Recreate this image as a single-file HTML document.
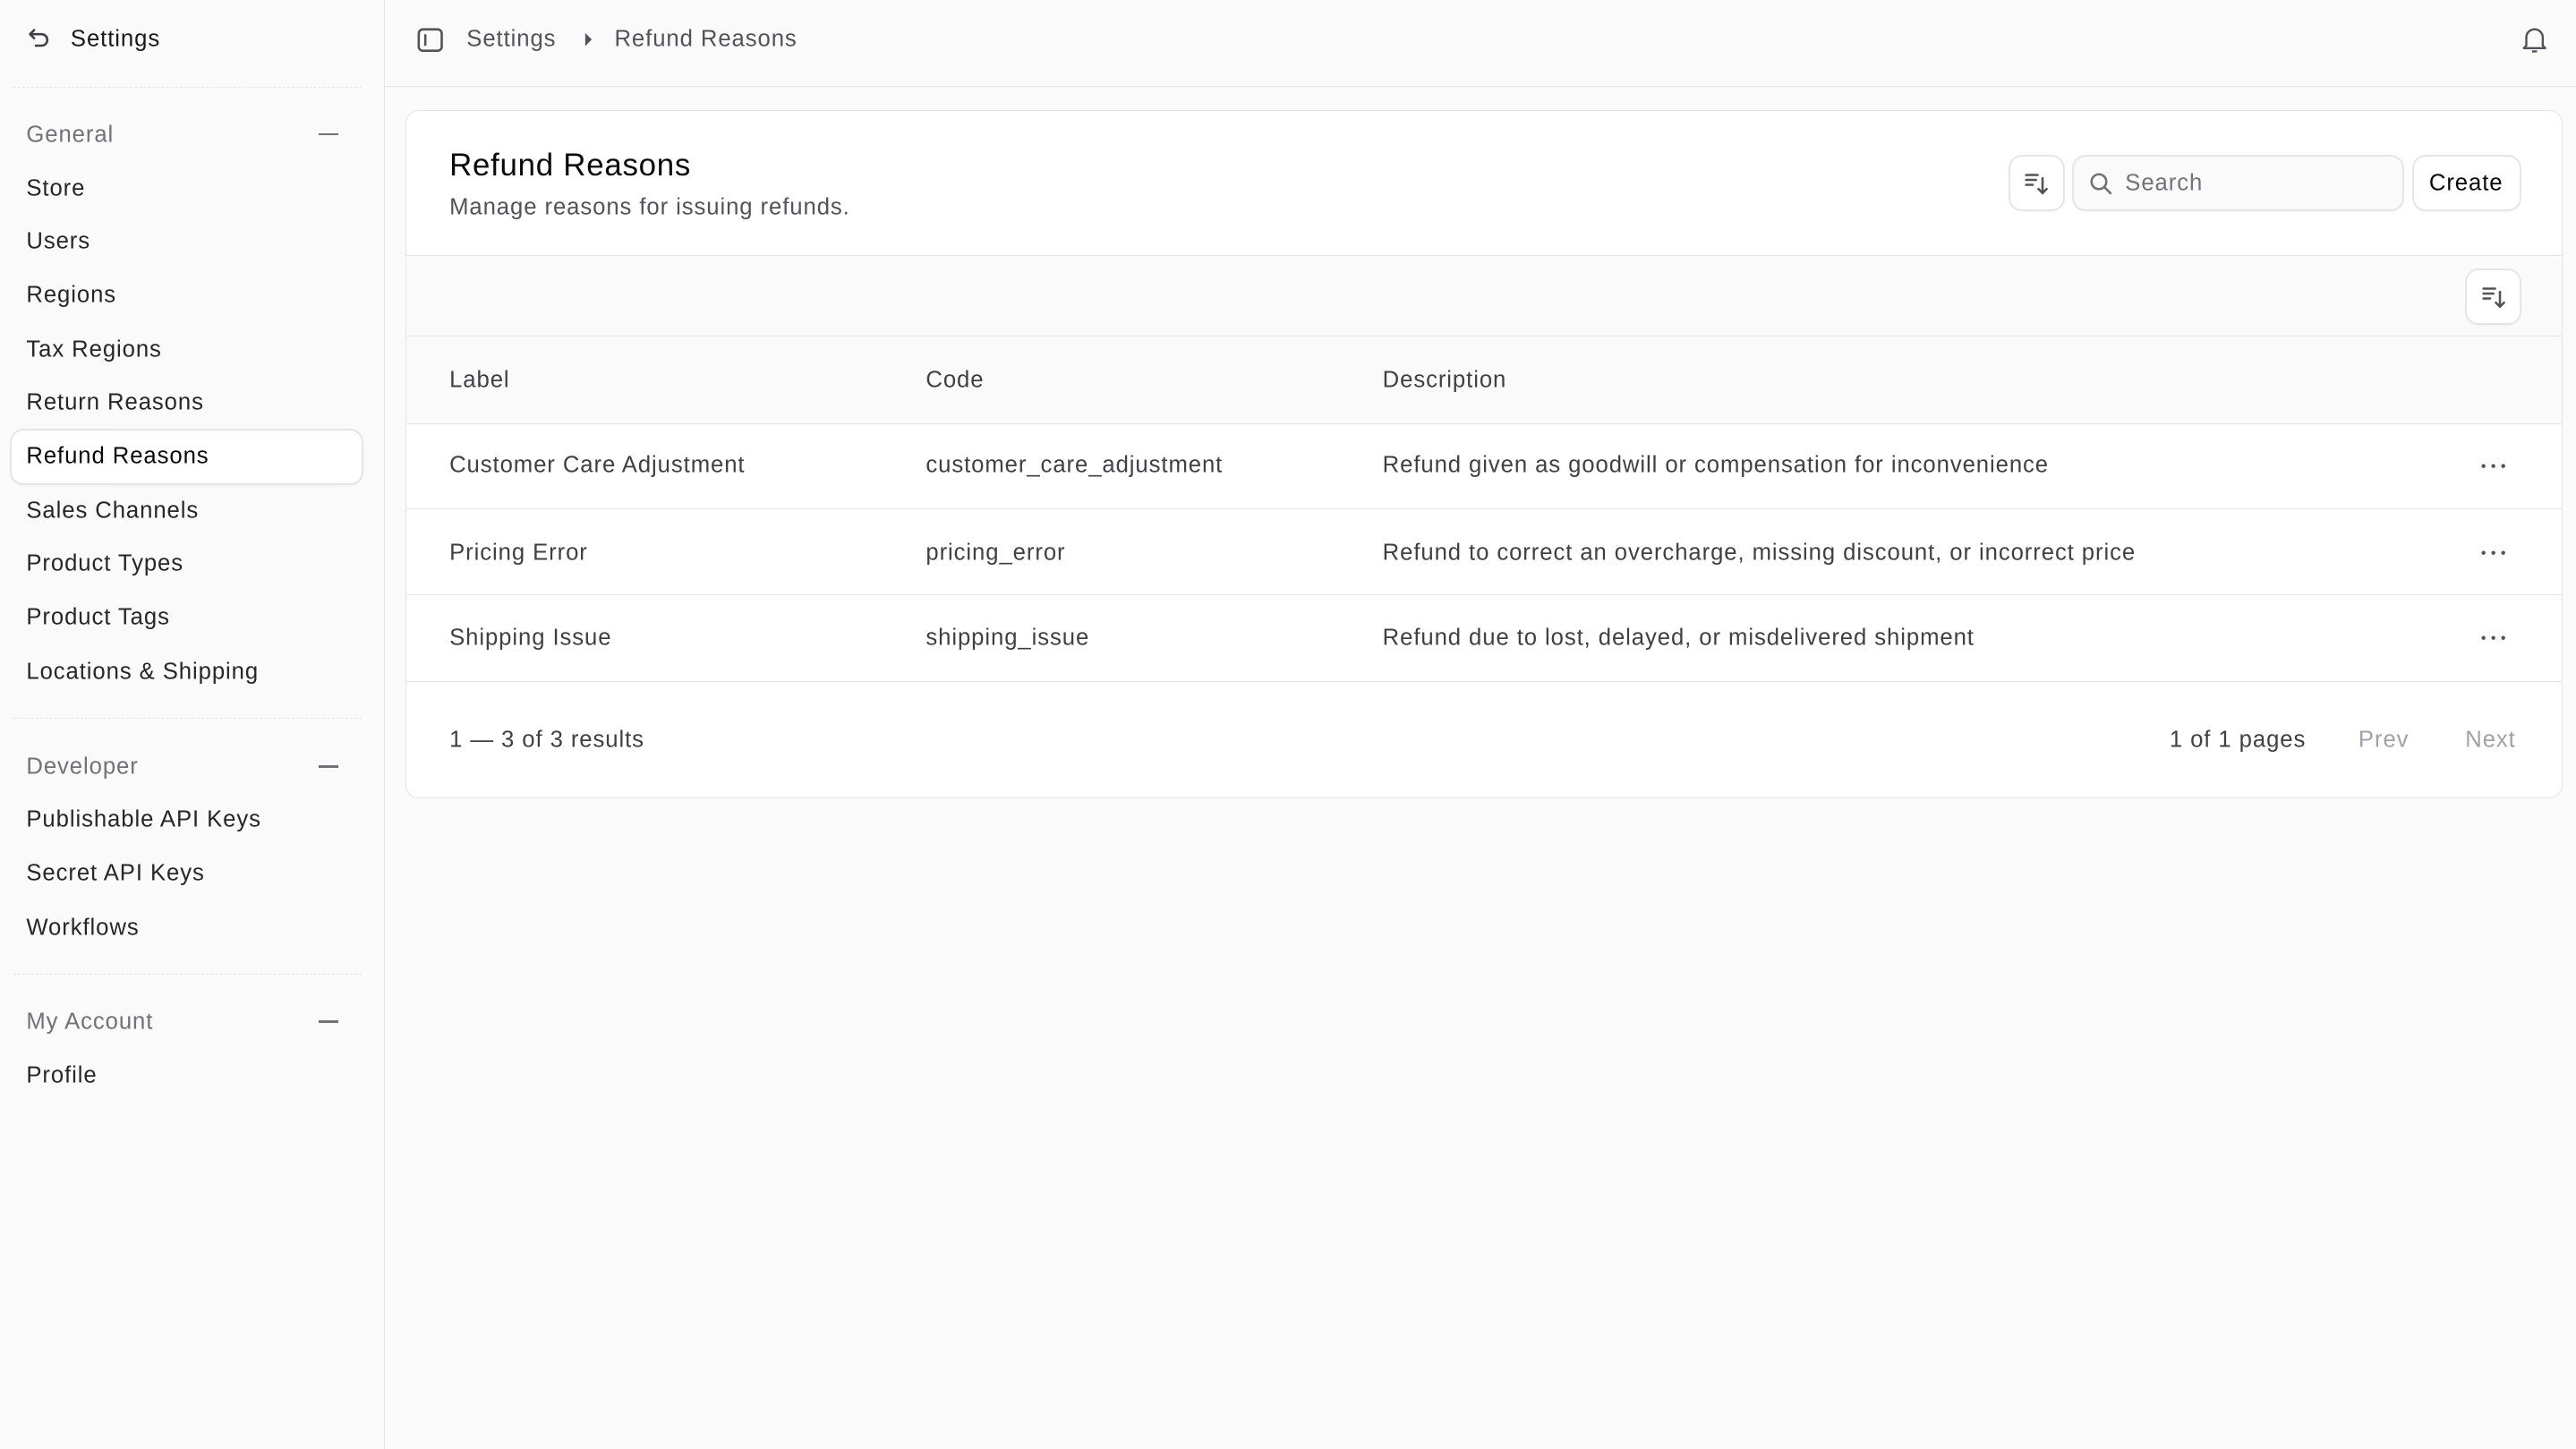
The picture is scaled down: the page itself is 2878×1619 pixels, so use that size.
<!DOCTYPE html>
<html><head><meta charset="utf-8"><style>
*{box-sizing:border-box;margin:0;padding:0}
html,body{width:2878px;height:1619px;overflow:hidden;background:#fafafa}
#r{zoom:1.8355;width:1568px;height:882px;position:relative;font-family:"Liberation Sans",sans-serif;font-size:14px;color:#18181b;letter-spacing:.5px}
.a{position:absolute;white-space:nowrap}
.side{left:0;top:0;width:234px;height:882px;border-right:1px solid #e4e4e7;background:#fafafa}
.sep{position:absolute;left:8px;width:212px;border-top:1px dashed #e4e4e7}
.it{position:absolute;left:16px;line-height:20px;transform:translateY(-10px);color:#27272a}
.gh{color:#71717a}
.min{position:absolute;left:194px;width:12px;height:1.5px;background:#71717a}
.top{left:234px;top:0;right:0;height:53px;border-bottom:1px solid #e4e4e7}
.card{left:247px;top:67px;width:1313px;height:419px;background:#fff;border:1px solid #e4e4e7;border-radius:8px;overflow:hidden}
.btn{position:absolute;background:#fff;border-radius:7px;box-shadow:0 0 0 1px #e4e4e7,0 1px 2px rgba(0,0,0,.08)}
.c{position:absolute;line-height:20px;transform:translateY(-10px);color:#3f3f46;white-space:nowrap}
.hl{position:absolute;left:0;right:0;border-top:1px solid #e4e4e7}
.dots{position:absolute;left:1262px;transform:translateY(0px)}
</style></head><body><div id="r">
<div class="a side">
<svg class="a" style="left:16px;top:16px" width="16" height="16" viewBox="0 0 16 16" fill="none" stroke="#3f3f46" stroke-width="1.4" stroke-linecap="round" stroke-linejoin="round"><path d="M5 2.5 2.5 5 5 7.5M2.5 5h7a3.5 3.5 0 0 1 0 7H6"/></svg>
<div class="it" style="left:43px;top:24px;color:#18181b">Settings</div>
<div class="sep" style="top:53px"></div>
<div class="it gh" style="top:82px">General</div><div class="min" style="top:81px"></div>
<div class="it" style="top:115px">Store</div>
<div class="it" style="top:147px">Users</div>
<div class="it" style="top:180px">Regions</div>
<div class="it" style="top:213px">Tax Regions</div>
<div class="it" style="top:245px">Return Reasons</div>
<div class="a" style="left:7px;top:262px;width:213px;height:32px;background:#fff;border-radius:7px;box-shadow:0 0 0 1px #e4e4e7,0 1px 2px rgba(0,0,0,.08)"></div>
<div class="it" style="top:278px;color:#09090b">Refund Reasons</div>
<div class="it" style="top:311px">Sales Channels</div>
<div class="it" style="top:343px">Product Types</div>
<div class="it" style="top:376px">Product Tags</div>
<div class="it" style="top:409px">Locations &amp; Shipping</div>
<div class="sep" style="top:437px"></div>
<div class="it gh" style="top:467px">Developer</div><div class="min" style="top:466px"></div>
<div class="it" style="top:499px">Publishable API Keys</div>
<div class="it" style="top:532px">Secret API Keys</div>
<div class="it" style="top:565px">Workflows</div>
<div class="sep" style="top:593px"></div>
<div class="it gh" style="top:622px">My Account</div><div class="min" style="top:621px"></div>
<div class="it" style="top:655px">Profile</div>
</div>
<div class="a top">
<svg class="a" style="left:20px;top:17px" width="16" height="15" viewBox="0 0 16 15" fill="none" stroke="#52525b" stroke-width="1.4"><rect x="1" y="1" width="14" height="13" rx="2.5"/><path d="M5 4v7"/></svg>
<div class="it" style="left:50px;top:24px;color:#52525b">Settings</div>
<svg class="a" style="left:121px;top:19px" width="6" height="10"><path d="M1 1l4 4-4 4z" fill="#52525b"/></svg>
<div class="it" style="left:140px;top:24px;color:#52525b">Refund Reasons</div>
<svg class="a" style="left:1301px;top:16px" width="16" height="17" viewBox="0 0 16 17" fill="none" stroke="#52525b" stroke-width="1.3" stroke-linejoin="round"><path d="M3 12V7a5 5 0 0 1 10 0v5l1.5 1.5h-13z"/><path d="M6.5 15.5h3"/></svg>
</div>
<div class="a card">
<div class="c" style="left:26px;top:33px;font-size:19px;line-height:24px;transform:translateY(-12px);color:#09090b;letter-spacing:.4px">Refund Reasons</div>
<div class="c" style="left:26px;top:59px;color:#52525b">Manage reasons for issuing refunds.</div>
<div class="btn" style="left:976px;top:28px;width:32px;height:32px"></div>
<svg class="a" style="left:984px;top:36px" width="16" height="16" viewBox="0 0 16 16" fill="none" stroke="#52525b" stroke-width="1.4" stroke-linecap="round"><path d="M2 3h7M2 6h6M2 9h4M12 5v9M9.5 11.5 12 14l2.5-2.5"/></svg>
<div class="btn" style="left:1015px;top:28px;width:200px;height:32px;background:#fafafa"></div>
<svg class="a" style="left:1024px;top:37px" width="14" height="14" viewBox="0 0 14 14" fill="none" stroke="#71717a" stroke-width="1.4" stroke-linecap="round"><circle cx="6" cy="6" r="4.5"/><path d="M9.5 9.5 13 13"/></svg>
<div class="c" style="left:1046px;top:44px;color:#71717a">Search</div>
<div class="btn" style="left:1222px;top:28px;width:64px;height:32px"></div>
<div class="c" style="left:1231px;top:44px;color:#09090b">Create</div>
<div class="hl" style="top:88px"></div>
<div class="a" style="left:0;right:0;top:89px;height:102px;background:#fafafa"></div>
<div class="btn" style="left:1254px;top:97px;width:32px;height:32px"></div>
<svg class="a" style="left:1262px;top:105px" width="16" height="16" viewBox="0 0 16 16" fill="none" stroke="#52525b" stroke-width="1.4" stroke-linecap="round"><path d="M2 3h7M2 6h6M2 9h4M12 5v9M9.5 11.5 12 14l2.5-2.5"/></svg>
<div class="hl" style="top:137px"></div>
<div class="c" style="left:26px;top:164px;color:#3f3f46">Label</div>
<div class="c" style="left:316px;top:164px">Code</div>
<div class="c" style="left:594px;top:164px">Description</div>
<div class="hl" style="top:190px"></div>
<div class="c" style="left:26px;top:216px">Customer Care Adjustment</div>
<div class="c" style="left:316px;top:216px">customer_care_adjustment</div>
<div class="c" style="left:594px;top:216px">Refund given as goodwill or compensation for inconvenience</div>
<svg class="dots" style="top:214px" width="16" height="4"><circle cx="2" cy="2" r="1.2" fill="#52525b"/><circle cx="8" cy="2" r="1.2" fill="#52525b"/><circle cx="14" cy="2" r="1.2" fill="#52525b"/></svg>
<div class="hl" style="top:242px"></div>
<div class="c" style="left:26px;top:269px">Pricing Error</div>
<div class="c" style="left:316px;top:269px">pricing_error</div>
<div class="c" style="left:594px;top:269px">Refund to correct an overcharge, missing discount, or incorrect price</div>
<svg class="dots" style="top:267px" width="16" height="4"><circle cx="2" cy="2" r="1.2" fill="#52525b"/><circle cx="8" cy="2" r="1.2" fill="#52525b"/><circle cx="14" cy="2" r="1.2" fill="#52525b"/></svg>
<div class="hl" style="top:294px"></div>
<div class="c" style="left:26px;top:321px">Shipping Issue</div>
<div class="c" style="left:316px;top:321px">shipping_issue</div>
<div class="c" style="left:594px;top:321px">Refund due to lost, delayed, or misdelivered shipment</div>
<svg class="dots" style="top:319px" width="16" height="4"><circle cx="2" cy="2" r="1.2" fill="#52525b"/><circle cx="8" cy="2" r="1.2" fill="#52525b"/><circle cx="14" cy="2" r="1.2" fill="#52525b"/></svg>
<div class="hl" style="top:347px"></div>
<div class="c" style="left:26px;top:383px">1 — 3 of 3 results</div>
<div class="c" style="left:1073px;top:383px">1 of 1 pages</div>
<div class="c" style="left:1188px;top:383px;color:#a1a1aa">Prev</div>
<div class="c" style="left:1253px;top:383px;color:#a1a1aa">Next</div>
</div>
</div></body></html>
